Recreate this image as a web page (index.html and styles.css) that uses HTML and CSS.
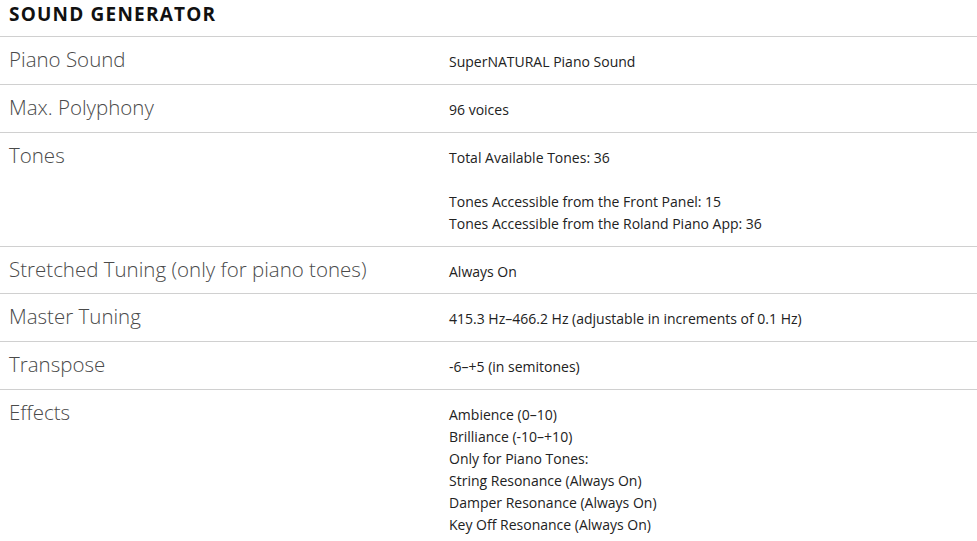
FILE: index.html
```html
<!DOCTYPE html>
<html>
<head>
<meta charset="utf-8">
<link rel="stylesheet" href="styles.css">
</head>
<body>
<div class="spec">
  <h2 class="spec-title">SOUND GENERATOR</h2>
  <div class="spec-row">
    <div class="spec-label">Piano Sound</div>
    <div class="spec-value">SuperNATURAL Piano Sound</div>
  </div>
  <div class="spec-row">
    <div class="spec-label">Max. Polyphony</div>
    <div class="spec-value">96 voices</div>
  </div>
  <div class="spec-row">
    <div class="spec-label">Tones</div>
    <div class="spec-value">Total Available Tones: 36<br><br>Tones Accessible from the Front Panel: 15<br>Tones Accessible from the Roland Piano App: 36</div>
  </div>
  <div class="spec-row spec-row--tight">
    <div class="spec-label">Stretched Tuning (only for piano tones)</div>
    <div class="spec-value">Always On</div>
  </div>
  <div class="spec-row">
    <div class="spec-label">Master Tuning</div>
    <div class="spec-value">415.3 Hz–466.2 Hz (adjustable in increments of 0.1 Hz)</div>
  </div>
  <div class="spec-row">
    <div class="spec-label">Transpose</div>
    <div class="spec-value">-6–+5 (in semitones)</div>
  </div>
  <div class="spec-row">
    <div class="spec-label">Effects</div>
    <div class="spec-value">Ambience (0–10)<br>Brilliance (-10–+10)<br>Only for Piano Tones:<br>String Resonance (Always On)<br>Damper Resonance (Always On)<br>Key Off Resonance (Always On)</div>
  </div>
</div>
</body>
</html>
```
FILE: styles.css
```css
html, body {
  margin: 0;
  padding: 0;
  background: #fff;
}
.spec {
  font-family: "Open Sans", "Liberation Sans", sans-serif;
  width: 977px;
}
.spec-title {
  margin: 0;
  height: 37px;
  box-sizing: border-box;
  padding: 3px 9px 0;
  font-size: 19px;
  letter-spacing: 1.2px;
  line-height: 22px;
  font-weight: 700;
  color: #111;
  border-bottom: 1px solid #d0d0d0;
}
.spec-row {
  display: grid;
  grid-template-columns: 440px 1fr;
  border-bottom: 1px solid #d0d0d0;
}
.spec-label {
  padding: 11px 9px 14px;
  font-size: 20.5px;
  font-weight: 300;
  line-height: 22px;
  color: #4a4a4a;
}
.spec-value {
  padding: 14px 9px 11px;
  font-size: 14px;
  line-height: 22px;
  color: #222;
}
.spec-row--tight .spec-label {
  padding-bottom: 13px;
}
.spec-row--tight .spec-value {
  padding-bottom: 10px;
}
```
